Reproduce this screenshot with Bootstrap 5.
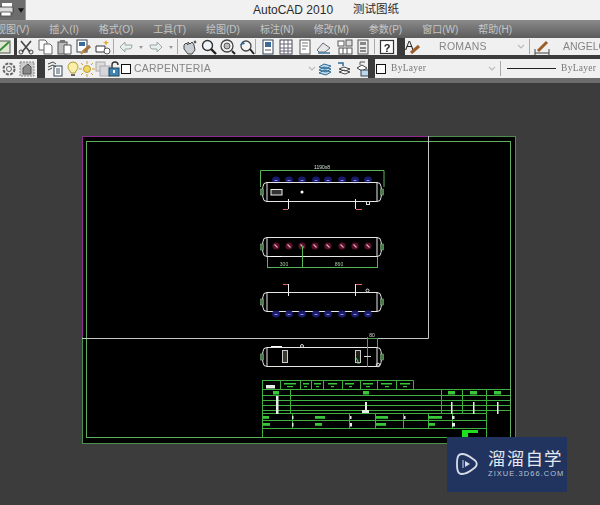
<!DOCTYPE html>
<html lang="zh">
<head>
    <meta charset="UTF-8">
    <title>AutoCAD 2010</title>
    <link href="https://cdn.jsdelivr.net/npm/bootstrap@5.3.0/dist/css/bootstrap.min.css" rel="stylesheet">
    <style>
        html, body { height: 505px; overflow: hidden; }
        body {
            background: #3c3c3c;
            font-family: "Liberation Sans", "Noto Sans CJK SC", sans-serif;
        }
        .cad-window { width: 600px; height: 505px; }
        .cad-title { height: 20px; background: #f1f1f1; color: #2b2b2b; font-size: 12px; }
        .cad-qa { width: 26px; height: 20px; background: #6d6d6d; gap: 4px; border-right: 1px solid #9a9a9a; flex: none; }
        .cad-title-name { margin-left: 227px; }
        .cad-title-doc { margin-left: 20px; font-size: 11.5px; }
        .cad-menu {
            height: 18px;
            background: linear-gradient(#8a8a8a, #5c5c5c);
            color: #c6c6c6;
            font-size: 10px;
            gap: 20px;
            white-space: nowrap;
            margin-left: -4px;
        }
        .cad-tools { height: 17px; background: #3a3a3a; }
        .cad-tools-second { height: 19px; margin-top: 4px; }
        .cad-panel { background: #f0f0f0; height: 100%; align-items: center; flex: none; overflow: hidden; }
        .cad-panel-last { flex: 1 1 0; min-width: 0; }
        .cad-panel > * { filter: blur(.35px); }
        .cad-gap { flex: none; }
        .tb-ic { width: 16px; height: 16px; flex: none; }
        .tb-small { width: 8px; height: 16px; flex: none; }
        .tb-sep { width: 1px; height: 15px; background: #a9a9a9; flex: none; }
        .tb-name { color: #858585; font-size: 10.5px; white-space: nowrap; flex: none; }
        .tb-serif { font-family: "Liberation Serif", serif; font-size: 9.5px; letter-spacing: .3px; color: #777; white-space: nowrap; flex: none; }
        .tb-chev { flex: none; }
        .cad-strip { height: 5px; background: #6c6c6c; }
        .cad-canvas { height: 422px; background: #3c3c3c; }
        .cad-canvas > svg { filter: blur(.45px); }
        .cad-brand {
            position: absolute;
            left: 447px;
            top: 354px;
            width: 120px;
            height: 55px;
            background: #20345f;
            color: #e4e7ee;
            padding: 10px 0 0 9px;
            gap: 8px;
        }
        .brand-logo { flex: none; margin-top: 4px; }
        .brand-cn { font-size: 17.5px; line-height: 22px; letter-spacing: 1.2px; font-family: "Noto Sans CJK SC", sans-serif; white-space: nowrap; }
        .brand-url { font-size: 7.5px; letter-spacing: 1.05px; line-height: 10px; color: #b9c0cf; white-space: nowrap; }
        .d-txt { font-family: "Liberation Sans", sans-serif; font-size: 5px; }
    </style>
</head>
<body>
<div class="cad-window d-flex flex-column">

    <!-- barre de titre -->
    <div class="cad-title d-flex align-items-center">
        <div class="cad-qa d-flex align-items-center">
            <svg width="14" height="14" viewBox="0 0 14 14"><rect x="2" y="0" width="10" height="4" fill="#fff"/><rect x="-2" y="4" width="15" height="6" rx="1" fill="#dcdcdc" stroke="#333" stroke-width=".8"/><rect x="1" y="9" width="10" height="4" fill="#fff" stroke="#444" stroke-width=".8"/></svg>
            <svg width="6" height="5" viewBox="0 0 7 5"><path d="M0 0h7L3.500 5z" fill="#111"/></svg>
        </div>
        <span class="cad-title-name">AutoCAD 2010</span>
        <span class="cad-title-doc">测试图纸</span>
    </div>

    <!-- menu -->
    <div class="cad-menu d-flex align-items-center">
        <span>视图(V)</span><span>插入(I)</span><span>格式(O)</span><span>工具(T)</span><span>绘图(D)</span><span>标注(N)</span><span>修改(M)</span><span>参数(P)</span><span>窗口(W)</span><span>帮助(H)</span>
    </div>

    <!-- barre d'outils 1 -->
    <div class="cad-tools d-flex">
        <div class="cad-panel d-flex" style="width:14px">
            <svg class="tb-ic" style="margin-left:-4px" viewBox="0 0 16 16"><rect x="1" y="2" width="13" height="12" fill="#dfe8d0" stroke="#555"/><path d="M2 13 13 3" stroke="#3c8a3c" stroke-width="2"/></svg>
        </div>
        <div class="cad-gap" style="width:3px"></div>
        <div class="cad-panel d-flex" style="width:380px;padding-left:1px;gap:3px">
            <!-- couper, copier, coller -->
            <svg class="tb-ic" viewBox="0 0 16 16"><path d="M3 2l9 11M13 2 4 13" stroke="#444" stroke-width="1.600" fill="none"/><circle cx="3" cy="13" r="2" fill="none" stroke="#444"/><circle cx="13" cy="13" r="2" fill="none" stroke="#444"/></svg>
            <svg class="tb-ic" viewBox="0 0 16 16"><path d="M2 1h6l2 2v8H2z" fill="#fff" stroke="#666"/><path d="M7 5h6l2 2v8H7z" fill="#fff" stroke="#666"/></svg>
            <svg class="tb-ic" viewBox="0 0 16 16"><rect x="2" y="3" width="9" height="12" fill="#bbb" stroke="#555"/><rect x="4" y="1" width="5" height="3" fill="#777"/><path d="M8 6h7v9H8z" fill="#fff" stroke="#555"/></svg>
            <svg class="tb-ic" viewBox="0 0 16 16"><rect x="2" y="1" width="10" height="12" fill="#fff" stroke="#345"/><rect x="4" y="3" width="6" height="4" fill="#3c6a96"/><path d="M15 7 8 13" stroke="#a0703a" stroke-width="3"/><path d="M9 12l-3 3" stroke="#c8903f" stroke-width="2"/></svg>
            <svg class="tb-ic" style="margin-left:1px" viewBox="0 0 16 16"><path d="M1 7h9v6H1z" fill="#fff" stroke="#333"/><circle cx="12" cy="12" r="3" fill="#fff" stroke="#555"/><path d="M11 1l1 2 2 .5-2 1-1 2-1-2-2-1 2-.5z" fill="#e2a933"/></svg>
            <span class="tb-sep" style="margin-left:-1px;margin-right:1px"></span>
            <svg class="tb-ic" viewBox="0 0 16 16"><path d="M7 3 2 8l5 5V10h4a3 3 0 0 0 3-3V6H7z" fill="#e9eeee" stroke="#9aa7a7"/></svg>
            <svg class="tb-small" viewBox="0 0 8 16"><path d="M2 7h4L4 10z" fill="#999"/></svg>
            <svg class="tb-ic" viewBox="0 0 16 16"><path d="M9 3l5 5-5 5V10H5a3 3 0 0 1-3-3V6h7z" fill="#e9eeee" stroke="#9aa7a7"/></svg>
            <svg class="tb-small" viewBox="0 0 8 16"><path d="M2 7h4L4 10z" fill="#999"/></svg>
            <span class="tb-sep" style="margin-left:-1px;margin-right:1px"></span>
            <!-- pan, zoom -->
            <svg class="tb-ic" viewBox="0 0 16 16"><path d="M2 6l2-2 2 2V3l2 2 2-2 2 3 1 5-3 4H6L2 10z" fill="#c8ced4" stroke="#444"/><path d="M13 1l.7 1.500L15 3l-1.300.6L13 5l-.7-1.400L11 3l1.300-.5z" fill="#333"/></svg>
            <svg class="tb-ic" viewBox="0 0 16 16"><circle cx="6.500" cy="6.500" r="5" fill="#eef4f8" stroke="#333" stroke-width="1.400"/><path d="M10 10l5 5" stroke="#222" stroke-width="2.400"/></svg>
            <svg class="tb-ic" viewBox="0 0 16 16"><circle cx="7" cy="7" r="6" fill="#f4f4f4" stroke="#444" stroke-width="1.300"/><rect x="4" y="4" width="6" height="6" rx="3" fill="#bbb" stroke="#555"/><path d="M12 12l3 3" stroke="#222" stroke-width="2"/></svg>
            <svg class="tb-ic" viewBox="0 0 16 16"><circle cx="7" cy="7" r="5" fill="#f4f4f4" stroke="#444" stroke-width="1.300"/><path d="M11 10l4 5" stroke="#222" stroke-width="2"/><path d="M1 6l3-4 2 3z" fill="#2f6a9c"/></svg>
            <span class="tb-sep" style="margin-left:-3px;margin-right:1px"></span>
            <!-- palettes -->
            <svg class="tb-ic" viewBox="0 0 16 16"><rect x="3" y="1" width="10" height="14" fill="#fff" stroke="#345"/><rect x="5" y="3" width="6" height="5" fill="#3c6a96"/><path d="M5 11h6" stroke="#555"/></svg>
            <svg class="tb-ic" style="margin-left:-1px" viewBox="0 0 16 16"><rect x="2" y="1" width="12" height="14" fill="#fff" stroke="#445"/><path d="M6 1v14M10 1v14M2 5h12M2 9h12M2 12h12" stroke="#667"/></svg>
            <svg class="tb-ic" viewBox="0 0 16 16"><rect x="3" y="1" width="10" height="14" fill="#fff" stroke="#555"/><path d="M5 4h6M5 7h6M5 10h4" stroke="#777"/></svg>
            <svg class="tb-ic" viewBox="0 0 16 16"><path d="M1 11l6-7 7 5-5 4H3z" fill="#e7e7e7" stroke="#667"/><path d="M2 14h12" stroke="#4a7aa0" stroke-width="1.600"/></svg>
            <svg class="tb-ic" style="margin-left:2px" viewBox="0 0 16 16"><rect x="1" y="2" width="6" height="5" fill="#fff" stroke="#555"/><rect x="9" y="1" width="6" height="6" fill="#ddd" stroke="#555"/><rect x="2" y="9" width="13" height="6" fill="#fff" stroke="#555"/><path d="M6 9v6M10 9v6" stroke="#555"/></svg>
            <svg class="tb-ic" style="margin-left:-1px" viewBox="0 0 16 16"><rect x="3" y="1" width="10" height="14" fill="#ededed" stroke="#555"/><rect x="5" y="3" width="6" height="3" fill="#888"/><path d="M5 9h6M5 12h6" stroke="#666" stroke-width="1.400"/></svg>
            <span class="tb-sep" style="margin-left:0;margin-right:1px"></span>
            <svg class="tb-ic" viewBox="0 0 16 16"><rect x="1.500" y="1.500" width="13" height="13" fill="#fff" stroke="#333" stroke-width="1.200"/><text x="8" y="12.500" text-anchor="middle" font-size="11" font-weight="700" fill="#222" font-family="Liberation Sans, sans-serif">?</text></svg>
        </div>
        <div class="cad-gap" style="width:8px"></div>
        <div class="cad-panel cad-panel-last d-flex">
            <svg class="tb-ic" style="margin-left:-1px" viewBox="0 0 16 16"><text x="1" y="11" font-size="13" fill="#222" font-family="Liberation Sans, sans-serif">A</text><path d="M15 7 7 14" stroke="#9a5e2a" stroke-width="3"/></svg>
            <span class="tb-name" style="margin-left:19px;width:72px;letter-spacing:.3px">ROMANS</span>
            <svg class="tb-chev" width="8" height="6" viewBox="0 0 8 6" style="margin-left:6px"><path d="M1 1l3 3 3-3" fill="none" stroke="#bbb" stroke-width="1.200"/></svg>
            <span class="tb-sep" style="margin-left:4px"></span>
            <svg class="tb-ic" style="margin-left:4px" viewBox="0 0 16 16"><path d="M1 14h14M1 10v6M15 10v6" stroke="#444"/><path d="M4 12 13 3" stroke="#9a5e2a" stroke-width="3"/></svg>
            <span class="tb-name" style="margin-left:13px">ANGELO</span>
        </div>
    </div>

    <div class="cad-tools cad-tools-second d-flex">
        <div class="cad-panel d-flex" style="width:37px;padding-left:1px;gap:2px">
            <svg class="tb-ic" viewBox="0 0 16 16"><circle cx="8" cy="8" r="5.500" fill="none" stroke="#666" stroke-width="2" stroke-dasharray="3 1.300"/><circle cx="8" cy="8" r="2.500" fill="none" stroke="#666"/></svg>
            <svg class="tb-ic" viewBox="0 0 16 16"><rect x="1" y="1" width="14" height="14" fill="#ccc" stroke="#888" stroke-dasharray="2 1"/><path d="M4 13V7l5-4 3 3v7z" fill="#888" stroke="#555"/></svg>
        </div>
        <div class="cad-gap" style="width:8px"></div>
        <div class="cad-panel d-flex" style="width:323px;padding-left:2px">
            <svg class="tb-ic" viewBox="0 0 16 16"><rect x="7" y="5" width="8" height="10" fill="#fff" stroke="#345"/><path d="M9 8h4M9 10h4M9 12h4" stroke="#456"/><path d="M1 3l5-2 3 2M1 6l5-2 3 2M1 9l4-2" fill="none" stroke="#444"/></svg>
            <svg class="tb-ic" style="margin-left:2px" viewBox="0 0 16 16"><path d="M8 1a5 5 0 0 1 3 9l-1 2H6L5 10A5 5 0 0 1 8 1z" fill="#fbf0a8" stroke="#b79a3a"/><path d="M6 14h4" stroke="#666" stroke-width="2"/></svg>
            <svg class="tb-ic" style="margin-left:-2px" viewBox="0 0 16 16"><circle cx="8" cy="8" r="3.500" fill="#f3d85e" stroke="#b79a3a"/><path d="M8 0v3M8 13v3M0 8h3M13 8h3M2 2l2 2M12 12l2 2M14 2l-2 2M4 12l-2 2" stroke="#c9a33c"/></svg>
            <svg class="tb-ic" viewBox="0 0 16 16"><rect x="1" y="1" width="9" height="9" fill="#ddd" stroke="#aaa"/><rect x="5" y="5" width="10" height="10" fill="#d5d5dc" stroke="#aaa"/></svg>
            <svg class="tb-ic" style="margin-left:-3px" viewBox="0 0 16 16"><rect x="1" y="7" width="10" height="8" fill="#3e86b8" stroke="#245"/><path d="M4 7V4a3 3 0 0 1 6 0" fill="none" stroke="#333" stroke-width="1.400"/><rect x="5" y="9" width="2" height="3" fill="#fff"/></svg>
            <svg class="tb-chev" width="10" height="10" viewBox="0 0 10 10" style="margin-left:-3px"><rect x=".5" y=".5" width="9" height="9" fill="#fff" stroke="#111"/></svg>
            <span class="tb-name" style="margin-left:3px;letter-spacing:.2px">CARPENTERIA</span>
            <svg class="tb-chev" width="8" height="6" viewBox="0 0 8 6" style="margin-left:97px"><path d="M1 1l3 3 3-3" fill="none" stroke="#bbb" stroke-width="1.200"/></svg>
            <svg class="tb-ic" style="margin-left:1px" viewBox="0 0 16 16"><path d="M2 6l5-3 7 2-5 3zM2 9l5-3 7 2-5 3zM2 12l5-3 7 2-5 3z" fill="#bcd7ea" stroke="#2d6a94"/></svg>
            <svg class="tb-ic" style="margin-left:3px" viewBox="0 0 16 16"><path d="M3 8l5-2 6 2-5 2zM3 11l5-2 6 2-5 2z" fill="#fff" stroke="#444"/><path d="M2 2h5v3" fill="none" stroke="#2d6a94" stroke-width="1.500"/></svg>
            <svg class="tb-ic" style="margin-left:3px" viewBox="0 0 16 16"><path d="M2 7l5-3 5 3-5 3z" fill="#fff" stroke="#444"/><rect x="6" y="9" width="9" height="6" fill="#bcd7ea" stroke="#345"/><path d="M5 4V1h5" fill="none" stroke="#555"/></svg>
        </div>
        <div class="cad-gap" style="width:7px"></div>
        <div class="cad-panel cad-panel-last d-flex" style="padding-left:1px">
            <svg class="tb-chev" width="10" height="10" viewBox="0 0 10 10"><rect x=".5" y=".5" width="9" height="9" fill="#fff" stroke="#111"/></svg>
            <span class="tb-serif" style="margin-left:5px;width:92px">ByLayer</span>
            <svg class="tb-chev" width="8" height="6" viewBox="0 0 8 6" style="margin-left:5px"><path d="M1 1l3 3 3-3" fill="none" stroke="#bbb" stroke-width="1.200"/></svg>
            <span class="tb-sep" style="margin-left:4px"></span>
            <span class="cad-gap" style="width:49px;height:1px;background:#222;margin-left:6px"></span>
            <span class="tb-serif" style="margin-left:5px">ByLayer</span>
        </div>
    </div>

    <div class="cad-strip"></div>

    <!-- zone de dessin -->
    <div class="cad-canvas position-relative">
        <svg class="d-block" width="600" height="422" viewBox="0 83 600 422">
            <defs>
                <g id="nozzle"><ellipse cx="0" cy="0" rx="4" ry="3.400" fill="#191a6c"/><path d="M-1.500 .5h3" stroke="#8f92d8"/></g>
                <g id="star"><circle r="3.600" fill="#5a1029"/><path d="M-1.500-1.500 1.500 1.500" stroke="#d8b4bc" stroke-width="1.100"/></g>
                <g id="vessel" fill="none" stroke="#e6e6e6">
                    <path d="M267 0H377M267 19H377M267 0V19M377 0V19"/>
                    <path d="M267 0Q263 0 263 4Q261 9.500 263 15Q263 19 267 19M377 0Q381 0 381 4Q383 9.500 381 15Q381 19 377 19"/>
                    <rect x="260.500" y="6.500" width="3" height="6" fill="#4d7a4d" stroke="#7faa7f" stroke-width=".6"/>
                    <rect x="380.500" y="6.500" width="3" height="6" fill="#4d7a4d" stroke="#7faa7f" stroke-width=".6"/>
                </g>
            </defs>

            <!-- feuille -->
            <rect x="82.500" y="136.500" width="433" height="307" fill="#000" stroke="#4d8f4d"/>
            <path d="M82.500 337V136.500H428" fill="none" stroke="#8f2a8f"/>
            <rect x="86.500" y="141.500" width="424" height="296" fill="none" stroke="#5fb05f"/>
            <path d="M428.500 136V338.500H82" fill="none" stroke="#c4c4c4"/>

            <!-- vue 1 -->
            <g fill="none" stroke="#57b657"><path d="M260.500 187V170.500H384V187"/></g>
            <text class="d-txt" x="322" y="169" text-anchor="middle" fill="#cfe3cf">1190x8</text>
            <g>
                <use href="#nozzle" x="276" y="180"/><use href="#nozzle" x="289" y="180"/><use href="#nozzle" x="302" y="180"/><use href="#nozzle" x="316" y="180"/><use href="#nozzle" x="328" y="180"/><use href="#nozzle" x="342" y="180"/><use href="#nozzle" x="355" y="180"/><use href="#nozzle" x="368" y="180"/>
            </g>
            <use href="#vessel" y="182.500"/>
            <rect x="271" y="189.500" width="11" height="5.500" fill="#333" stroke="#eee"/>
            <circle cx="302" cy="192" r="1.500" fill="#fff"/>
            <path d="M288.500 199V209M355.500 199V209" stroke="#eee" fill="none"/>
            <path d="M283 209.500H288M356 209.500H362" stroke="#d86a6a"/>
            <rect x="366.500" y="201.500" width="3" height="3" fill="none" stroke="#ddd"/>

            <!-- vue 2 -->
            <use href="#vessel" y="237.500"/>
            <g>
                <use href="#star" x="276" y="246"/><use href="#star" x="289" y="246"/><use href="#star" x="302" y="246"/><use href="#star" x="315" y="246"/><use href="#star" x="328" y="246"/><use href="#star" x="342" y="246"/><use href="#star" x="355" y="246"/><use href="#star" x="368" y="246"/>
            </g>
            <path d="M271 256.500H282" stroke="#fff"/>
            <path d="M267.500 257V268M302.500 246V268M377.500 257V268M267 267.500H378" stroke="#57b657" fill="none"/>
            <text class="d-txt" x="284" y="266" text-anchor="middle" fill="#a8c8a8">300</text>
            <text class="d-txt" x="339" y="266" text-anchor="middle" fill="#a8c8a8">860</text>

            <!-- vue 3 -->
            <use href="#vessel" y="292.500"/>
            <g>
                <use href="#nozzle" x="276" y="314"/><use href="#nozzle" x="289" y="314"/><use href="#nozzle" x="302" y="314"/><use href="#nozzle" x="316" y="314"/><use href="#nozzle" x="328" y="314"/><use href="#nozzle" x="342" y="314"/><use href="#nozzle" x="355" y="314"/><use href="#nozzle" x="368" y="314"/>
            </g>
            <path d="M288.500 284V296M355.500 284V296" stroke="#eee"/>
            <path d="M283 284.500H288M356 284.500H362" stroke="#d86a6a"/>
            <circle cx="367.500" cy="290.500" r="1.500" fill="none" stroke="#ddd"/>

            <!-- vue 4 -->
            <use href="#vessel" y="347.500"/>
            <path d="M271 346.500H282" stroke="#fff"/>
            <circle cx="302" cy="346" r="1.500" fill="none" stroke="#ddd"/>
            <rect x="282.500" y="350.500" width="5" height="12" fill="#3a3a30" stroke="#ccc"/>
            <rect x="355.500" y="350.500" width="5" height="12" fill="#22221c" stroke="#ccc"/>
            <path d="M367.500 337V367M377.500 338V347M367 338.500H378" stroke="#4fa04f" fill="none"/>
            <text class="d-txt" x="372" y="337" text-anchor="middle" fill="#dcdcdc">80</text>
            <path d="M364 356.500H371" stroke="#ddd"/>
            <path d="M356 358l2 3-1 2h3" stroke="#5fd07a" fill="none"/>
            <circle cx="378" cy="365" r="1.800" fill="none" stroke="#ddd"/>

            <!-- cartouche -->
            <g fill="none" stroke="#3fb03f">
                <path d="M262.500 389V437.500H510"/>
                <path d="M262.500 380.500H413.500V389M262 389.500H510"/>
                <path d="M262.500 380V389M280.500 380V389M300.500 380V389M311.500 380V389M323.500 380V389M342.500 380V389M360.500 380V389M377.500 380V389M396.500 380V389"/>
                <path d="M263 395.500H510M263 400.500H510M263 405.500H510M263 410.500H510M263 413.500H486M263 420.500H486M263 428.500H486"/>
                <path d="M290.500 389V414M441.500 389V414M462.500 389V414M486.500 389V437"/>
                <path d="M292.500 414V428M349.500 414V428M375.500 414V428M403.500 414V428M428.500 414V428M452.500 414V428"/>
            </g>
            <g fill="#39c639">
                <rect x="273" y="391" width="6" height="3.500"/><rect x="363" y="391" width="6" height="3.500"/><rect x="448" y="391" width="7" height="3.500"/><rect x="470" y="391" width="7" height="3.500"/><rect x="494" y="391" width="7" height="3.500"/>
                <rect x="284" y="383" width="12" height="1.500"/><rect x="303" y="383" width="6" height="1.500"/><rect x="314" y="383" width="7" height="1.500"/><rect x="328" y="383" width="9" height="1.500"/><rect x="345" y="383" width="9" height="1.500"/><rect x="363" y="383" width="10" height="1.500"/><rect x="381" y="383" width="11" height="1.500"/><rect x="400" y="383" width="10" height="1.500"/>
                <rect x="287" y="386" width="6" height="1.200"/><rect x="304" y="386" width="3" height="1.200"/><rect x="316" y="386" width="3" height="1.200"/><rect x="331" y="386" width="3" height="1.200"/><rect x="349" y="386" width="3" height="1.200"/><rect x="366" y="386" width="4" height="1.200"/><rect x="385" y="386" width="4" height="1.200"/><rect x="403" y="386" width="4" height="1.200"/>
                <rect x="263" y="416" width="6" height="2.800"/><rect x="315" y="416" width="10" height="2.800"/><rect x="376" y="416" width="12" height="2.800"/><rect x="428" y="416" width="14" height="2.800"/>
                <rect x="263" y="423" width="7" height="2.800"/><rect x="315" y="423" width="7" height="2.800"/><rect x="376" y="423" width="10" height="2.800"/><rect x="428" y="423" width="7" height="2.800"/>
                <path d="M462 430h16v3h-10v4h-6z" fill="#1fe01f"/>
            </g>
            <g fill="#e6f0e6">
                <rect x="266" y="385" width="9" height="3.500"/>
                <rect x="276" y="396" width="2.500" height="18"/>
                <rect x="365" y="402" width="2" height="8"/><rect x="362" y="410" width="7" height="3"/>
                <rect x="451" y="402" width="1.500" height="12"/><rect x="473" y="402" width="1.500" height="12"/><rect x="497" y="402" width="1.500" height="12"/>
                <rect x="292" y="416" width="1.500" height="3"/><rect x="350" y="416" width="1.500" height="3"/><rect x="404" y="416" width="1.500" height="3"/><rect x="452" y="416" width="2.500" height="3"/>
                <rect x="292" y="423" width="1.500" height="3.500"/><rect x="350" y="423" width="2" height="3.500"/><rect x="452" y="423" width="3" height="3.500"/>
            </g>
        </svg>

        <!-- filigrane -->
        <div class="cad-brand d-flex">
            <svg class="brand-logo" width="24" height="26" viewBox="0 0 24 26"><path d="M6 3C2 3 1 6 1 13s1 10 5 10c3 0 6-1 11-5 5-3 5-7 0-10C12 4 9 3 6 3z" fill="none" stroke="#d8dce6" stroke-width="1.800"/><path d="M9 10l5 3-5 3z" fill="#d8dce6"/><path d="M7 9v8" stroke="#d8dce6"/></svg>
            <div>
                <div class="brand-cn">溜溜自学</div>
                <div class="brand-url">ZIXUE.3D66.COM</div>
            </div>
        </div>
    </div>
</div>

<script src="https://cdn.jsdelivr.net/npm/bootstrap@5.3.0/dist/js/bootstrap.bundle.min.js"></script>
</body>
</html>
